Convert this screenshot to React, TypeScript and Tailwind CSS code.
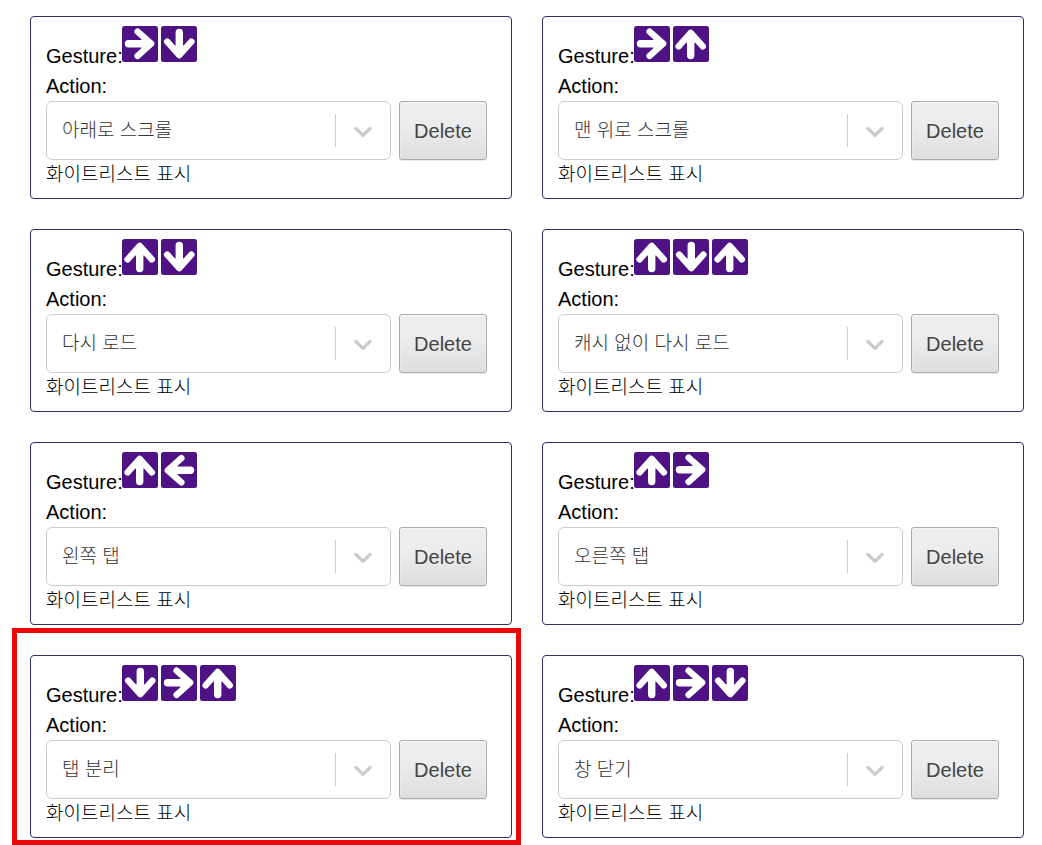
import { useState } from 'react';
import clsx from 'clsx';

type Direction = 'up' | 'right' | 'down' | 'left';

interface Gesture {
  id: string;
  directions: Direction[];
  action: string;
  highlighted?: boolean;
}

const ACTIONS = [
  '아래로 스크롤',
  '맨 위로 스크롤',
  '다시 로드',
  '캐시 없이 다시 로드',
  '왼쪽 탭',
  '오른쪽 탭',
  '탭 분리',
  '창 닫기',
];

const GESTURES: Gesture[] = [
  { id: 'RD', directions: ['right', 'down'], action: '아래로 스크롤' },
  { id: 'RU', directions: ['right', 'up'], action: '맨 위로 스크롤' },
  { id: 'UD', directions: ['up', 'down'], action: '다시 로드' },
  { id: 'UDU', directions: ['up', 'down', 'up'], action: '캐시 없이 다시 로드' },
  { id: 'UL', directions: ['up', 'left'], action: '왼쪽 탭' },
  { id: 'UR', directions: ['up', 'right'], action: '오른쪽 탭' },
  { id: 'DRU', directions: ['down', 'right', 'up'], action: '탭 분리', highlighted: true },
  { id: 'URD', directions: ['up', 'right', 'down'], action: '창 닫기' },
];

const ROTATION: Record<Direction, string> = {
  right: 'rotate(0 18 18)',
  down: 'rotate(90 18 18)',
  left: 'rotate(180 18 18)',
  up: 'rotate(270 18 18)',
};

function ArrowIcon({ direction }: { direction: Direction }) {
  return (
    <svg viewBox="0 0 36 36" className="size-9 shrink-0" role="img" aria-label={direction}>
      <rect width="36" height="36" rx="2.5" fill="#4e1284" />
      <g
        transform={ROTATION[direction]}
        fill="none"
        stroke="#fff"
        strokeLinecap="round"
        strokeLinejoin="round"
      >
        <path d="M6.5 17.7H26" strokeWidth="7.4" />
        <path d="M15.6 5.6L29.2 17.7L15.6 29.8" strokeWidth="6.4" />
        <path d="M21 13.5L26.5 17.7L21 21.9Z" fill="#fff" strokeWidth="3" />
      </g>
    </svg>
  );
}

function GestureCard({ gesture, onDelete }: { gesture: Gesture; onDelete: () => void }) {
  const [action, setAction] = useState(gesture.action);
  const selectId = `action-${gesture.id}`;

  return (
    <li className="relative rounded border border-[#312e6b] px-[15px] pt-[9px] pb-2">
      <div className="flex h-[45px] items-end">
        <span className="w-19">Gesture:</span>
        <span className="flex gap-[3px] self-start">
          {gesture.directions.map((direction, i) => (
            <ArrowIcon key={i} direction={direction} />
          ))}
        </span>
      </div>

      <label htmlFor={selectId} className="block">
        Action:
      </label>

      <div className="flex gap-2 pr-[9px]">
        <div className="relative min-w-0 flex-1">
          <select
            id={selectId}
            value={action}
            onChange={(e) => setAction(e.target.value)}
            className="h-[59px] w-full appearance-none rounded-md border border-[#ccc] bg-white pr-16 pl-[15px] text-[19px] font-light text-[#333]"
          >
            {ACTIONS.map((name) => (
              <option key={name}>{name}</option>
            ))}
          </select>
          {/* Divider and chevron */}
          <div
            className="pointer-events-none absolute inset-y-3 right-[13px] flex items-center gap-3 text-[#ccc]"
            aria-hidden="true"
          >
            <span className="h-[33px] w-px bg-[#ccc]" />
            <svg viewBox="0 0 20 20" className="size-[30px]" fill="currentColor">
              <path d="M4.516 7.548c0.436-0.446 1.043-0.481 1.576 0l3.908 3.747 3.908-3.747c0.533-0.481 1.141-0.446 1.574 0 0.436 0.445 0.408 1.197 0 1.615-0.406 0.418-4.695 4.502-4.695 4.502-0.217 0.223-0.502 0.335-0.787 0.335s-0.57-0.112-0.789-0.335c0 0-4.287-4.084-4.695-4.502s-0.436-1.17 0-1.615z" />
            </svg>
          </div>
        </div>

        <button
          type="button"
          onClick={onDelete}
          className="w-[88px] rounded-[3px] border border-[#aaa] bg-[linear-gradient(#ededed,#ededed_38%,#dedede)] text-[#444] shadow-[0_1px_0_rgba(0,0,0,0.08),inset_0_1px_2px_rgba(255,255,255,0.75)] [text-shadow:0_1px_0_rgb(240,240,240)]"
        >
          Delete
        </button>
      </div>

      <button type="button" className="block text-[19px] font-light">
        화이트리스트 표시
      </button>

      {gesture.highlighted && (
        <div
          className="pointer-events-none absolute -top-7 -right-2.5 -bottom-2 -left-[19px] border-5 border-[#eb0808]"
          aria-hidden="true"
        />
      )}
    </li>
  );
}

export default function App() {
  const [gestures, setGestures] = useState(GESTURES);

  return (
    <main
      className={clsx(
        'bg-white pt-4 pr-[18px] pb-[7px] pl-[30px] text-black',
        "font-['Liberation_Sans','Noto_Sans_CJK_KR',sans-serif] text-[20px] leading-[30px]",
      )}
    >
      <ul className="grid grid-cols-2 gap-[30px]">
        {gestures.map((gesture) => (
          <GestureCard
            key={gesture.id}
            gesture={gesture}
            onDelete={() => setGestures(gestures.filter((g) => g.id !== gesture.id))}
          />
        ))}
      </ul>
    </main>
  );
}
